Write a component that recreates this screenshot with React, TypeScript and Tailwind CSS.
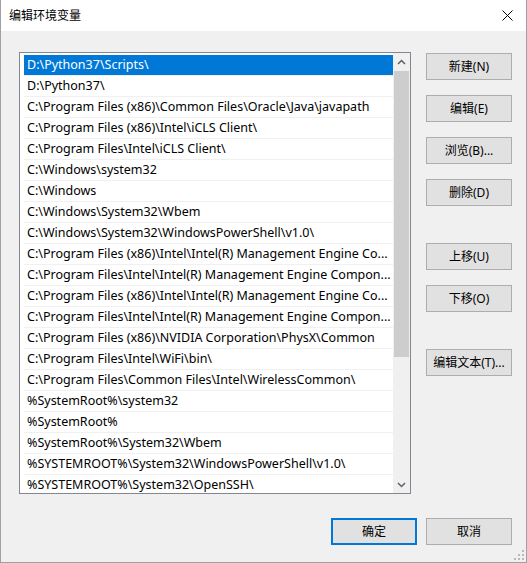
import React from 'react';

const paths = [
  'D:\\Python37\\Scripts\\',
  'D:\\Python37\\',
  'C:\\Program Files (x86)\\Common Files\\Oracle\\Java\\javapath',
  'C:\\Program Files (x86)\\Intel\\iCLS Client\\',
  'C:\\Program Files\\Intel\\iCLS Client\\',
  'C:\\Windows\\system32',
  'C:\\Windows',
  'C:\\Windows\\System32\\Wbem',
  'C:\\Windows\\System32\\WindowsPowerShell\\v1.0\\',
  'C:\\Program Files (x86)\\Intel\\Intel(R) Management Engine Co...',
  'C:\\Program Files\\Intel\\Intel(R) Management Engine Compon...',
  'C:\\Program Files (x86)\\Intel\\Intel(R) Management Engine Co...',
  'C:\\Program Files\\Intel\\Intel(R) Management Engine Compon...',
  'C:\\Program Files (x86)\\NVIDIA Corporation\\PhysX\\Common',
  'C:\\Program Files\\Intel\\WiFi\\bin\\',
  'C:\\Program Files\\Common Files\\Intel\\WirelessCommon\\',
  '%SystemRoot%\\system32',
  '%SystemRoot%',
  '%SystemRoot%\\System32\\Wbem',
  '%SYSTEMROOT%\\System32\\WindowsPowerShell\\v1.0\\',
  '%SYSTEMROOT%\\System32\\OpenSSH\\',
];

function Btn({ label, primary, className }: { label: string; primary?: boolean; className?: string }) {
  return (
    <button
      type="button"
      className={
        'h-[27px] w-[86px] bg-[#e1e1e1] text-[12px] text-black leading-none flex items-center justify-center ' +
        (primary ? 'border-2 border-[#0078d7] ' : 'border border-[#adadad] ') +
        (className ?? '')
      }
    >
      {label}
    </button>
  );
}

export default function App() {
  return (
    <div
      className="w-[527px] h-[563px] bg-[#f0f0f0] border-x border-b border-[#a0a0a0] flex flex-col overflow-hidden"
      style={{ fontFamily: '"Noto Sans", "Noto Sans CJK SC", sans-serif' }}
    >
      {/* Title bar */}
      <div className="h-[31px] bg-white flex items-center justify-between pl-[8px] pr-[13px] shrink-0">
        <span className="text-[12px] text-black">编辑环境变量</span>
        <svg width="11" height="11" viewBox="0 0 11 11" className="text-black">
          <path d="M0.5 0.5 L10.5 10.5 M10.5 0.5 L0.5 10.5" stroke="currentColor" strokeWidth="1" />
        </svg>
      </div>

      {/* Body */}
      <div className="flex pt-[21px] pl-[18px]">
        {/* List box */}
        <div className="w-[392px] h-[442px] bg-white border border-[#828790] flex pl-[4px] overflow-hidden">
          <div className="flex-1 flex flex-col overflow-hidden pt-[2px]">
            {paths.map((p, i) => (
              <div
                key={i}
                className={
                  'h-[21px] shrink-0 flex items-center pl-[3px] text-[12.5px] whitespace-nowrap overflow-hidden border-b border-[#f0f0f0] ' +
                  (i === 0 ? 'bg-[#0078d7] text-white' : 'text-black')
                }
              >
                {p}
              </div>
            ))}
          </div>
          {/* Scrollbar */}
          <div className="w-[17px] bg-[#f0f0f0] flex flex-col items-center shrink-0">
            <div className="h-[17px] flex items-center justify-center">
              <svg width="9" height="6" viewBox="0 0 9 6">
                <path d="M1 5 L4.5 1.5 L8 5" stroke="#606060" strokeWidth="1.5" fill="none" />
              </svg>
            </div>
            <div className="w-[15px] h-[286px] bg-[#cdcdcd] mt-[1px]" />
            <div className="flex-1" />
            <div className="h-[17px] flex items-center justify-center">
              <svg width="9" height="6" viewBox="0 0 9 6">
                <path d="M1 1 L4.5 4.5 L8 1" stroke="#606060" strokeWidth="1.5" fill="none" />
              </svg>
            </div>
          </div>
        </div>

        {/* Side buttons */}
        <div className="flex flex-col ml-[15px] pt-[1px]">
          <Btn label="新建(N)" />
          <Btn label="编辑(E)" className="mt-[15px]" />
          <Btn label="浏览(B)..." className="mt-[15px]" />
          <Btn label="删除(D)" className="mt-[15px]" />
          <Btn label="上移(U)" className="mt-[37px]" />
          <Btn label="下移(O)" className="mt-[15px]" />
          <Btn label="编辑文本(T)..." className="mt-[37px]" />
        </div>
      </div>

      {/* Footer */}
      <div className="flex justify-end gap-[9px] pr-[14px] mt-[24px]">
        <Btn label="确定" primary />
        <Btn label="取消" />
      </div>

      <div className="flex-1 flex items-end justify-end pr-[2px] pb-[2px]">
        <svg width="11" height="11" viewBox="0 0 11 11">
          <rect x="9" y="1" width="2" height="2" fill="#b8b8b8" />
          <rect x="5" y="5" width="2" height="2" fill="#b8b8b8" />
          <rect x="9" y="5" width="2" height="2" fill="#b8b8b8" />
          <rect x="1" y="9" width="2" height="2" fill="#b8b8b8" />
          <rect x="5" y="9" width="2" height="2" fill="#b8b8b8" />
          <rect x="9" y="9" width="2" height="2" fill="#b8b8b8" />
        </svg>
      </div>
    </div>
  );
}
